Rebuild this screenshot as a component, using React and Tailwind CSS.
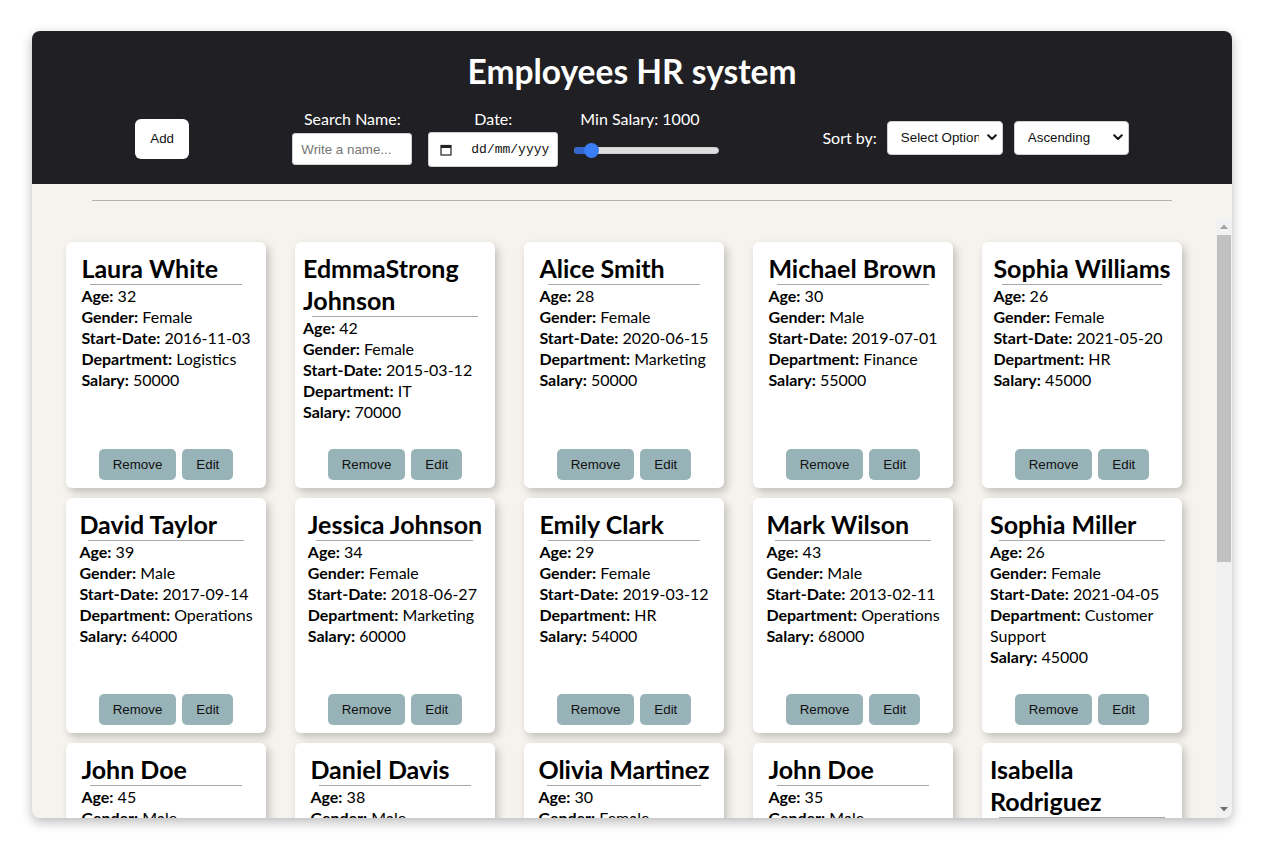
import React from "react";

const employees = [
  { name: "Laura White", age: 32, gender: "Female", start: "2016-11-03", dept: "Logistics", salary: 50000 },
  { name: "EdmmaStrong Johnson", age: 42, gender: "Female", start: "2015-03-12", dept: "IT", salary: 70000 },
  { name: "Alice Smith", age: 28, gender: "Female", start: "2020-06-15", dept: "Marketing", salary: 50000 },
  { name: "Michael Brown", age: 30, gender: "Male", start: "2019-07-01", dept: "Finance", salary: 55000 },
  { name: "Sophia Williams", age: 26, gender: "Female", start: "2021-05-20", dept: "HR", salary: 45000 },
  { name: "David Taylor", age: 39, gender: "Male", start: "2017-09-14", dept: "Operations", salary: 64000 },
  { name: "Jessica Johnson", age: 34, gender: "Female", start: "2018-06-27", dept: "Marketing", salary: 60000 },
  { name: "Emily Clark", age: 29, gender: "Female", start: "2019-03-12", dept: "HR", salary: 54000 },
  { name: "Mark Wilson", age: 43, gender: "Male", start: "2013-02-11", dept: "Operations", salary: 68000 },
  { name: "Sophia Miller", age: 26, gender: "Female", start: "2021-04-05", dept: "Customer Support", salary: 45000 },
  { name: "John Doe", age: 45, gender: "Male", start: "2012-05-10", dept: "Finance", salary: 72000 },
  { name: "Daniel Davis", age: 38, gender: "Male", start: "2016-08-22", dept: "IT", salary: 66000 },
  { name: "Olivia Martinez", age: 30, gender: "Female", start: "2019-10-01", dept: "Logistics", salary: 52000 },
  { name: "John Doe", age: 35, gender: "Male", start: "2018-01-15", dept: "Sales", salary: 58000 },
  { name: "Isabella Rodriguez", age: 27, gender: "Female", start: "2020-02-17", dept: "Marketing", salary: 48000 },
  { name: "James Anderson", age: 41, gender: "Male", start: "2014-04-09", dept: "Finance", salary: 69000 },
  { name: "Emma Thomas", age: 31, gender: "Female", start: "2019-11-25", dept: "HR", salary: 51000 },
  { name: "William Jackson", age: 36, gender: "Male", start: "2017-03-30", dept: "IT", salary: 63000 },
  { name: "Ava Harris", age: 24, gender: "Female", start: "2022-06-06", dept: "Sales", salary: 42000 },
  { name: "Noah Martin", age: 33, gender: "Male", start: "2018-12-03", dept: "Operations", salary: 57000 },
];

function Chevron() {
  return (
    <svg width="10" height="7" viewBox="0 0 10 7" className="shrink-0">
      <path d="M1.2 1.2 L5 5 L8.8 1.2" fill="none" stroke="#111" strokeWidth="2" strokeLinecap="round" strokeLinejoin="round" />
    </svg>
  );
}

function FakeSelect({ label, width }) {
  return (
    <div
      className={`flex items-center h-[34px] bg-white rounded-[4px] border border-[#cfcfcf] pl-[13px] pr-[5px] font-['Liberation_Sans',Arial,sans-serif] text-[13.33px] text-[#111] ${width}`}
    >
      <span className="w-[78px] overflow-hidden whitespace-nowrap">{label}</span>
      <span className="flex-1" />
      <Chevron />
    </div>
  );
}

function Card({ e }) {
  return (
    <div className="flex flex-col items-center bg-white rounded-md shadow-[3px_4px_8px_rgba(0,0,0,0.22)] pt-[10px] px-2 pb-2">
      <div className="max-w-full text-black">
        <h2 className="text-[25px] font-bold leading-[32px]">{e.name}</h2>
        <hr className="w-[90%] mx-auto border-0 border-t border-[#a9a9a9]" />
        <div className="text-[16px] leading-[21px]">
          <p><b>Age:</b> {e.age}</p>
          <p><b>Gender:</b> {e.gender}</p>
          <p><b>Start-Date:</b> {e.start}</p>
          <p><b>Department:</b> {e.dept}</p>
          <p><b>Salary:</b> {e.salary}</p>
        </div>
      </div>
      <div className="mt-auto pt-[27px] flex gap-[6px] font-['Liberation_Sans',Arial,sans-serif] text-[13.33px] text-[#111]">
        <button className="h-[31px] px-[14px] rounded-[5px] bg-[#97b3b8]">Remove</button>
        <button className="h-[31px] px-[14px] rounded-[5px] bg-[#97b3b8]">Edit</button>
      </div>
    </div>
  );
}

function Scrollbar() {
  return (
    <div className="w-[16px] shrink-0 bg-[#f1f1f1] flex flex-col">
      <div className="h-[17px] flex items-center justify-center">
        <svg width="8" height="5" viewBox="0 0 8 5">
          <path d="M0 5 L4 0.5 L8 5 Z" fill="#a3a3a3" />
        </svg>
      </div>
      <div className="flex-1 px-[1px]">
        <div className="h-[327px] bg-[#c1c1c1]" />
      </div>
      <div className="h-[17px] flex items-center justify-center">
        <svg width="8" height="5" viewBox="0 0 8 5">
          <path d="M0 0 L4 4.5 L8 0 Z" fill="#6e6e6e" />
        </svg>
      </div>
    </div>
  );
}

export default function App() {
  return (
    <div className="min-h-screen bg-white pt-[31px] pl-8 pb-[25px] font-['Lato','Noto_Sans',sans-serif]">
      <div className="w-[1200px] rounded-lg overflow-hidden bg-[#f6f3ee] shadow-[0_4px_12px_rgba(0,0,0,0.28)]">
        <header className="bg-[#202024] pt-[19px] pb-[17px]">
          <h1 className="text-center text-white text-[33.5px] font-bold leading-[42px]">Employees HR system</h1>
          <div className="flex justify-evenly items-center mt-[16px]">
            <button className="w-[54px] h-[40px] bg-white rounded-md font-['Liberation_Sans',Arial,sans-serif] text-[13.33px] text-[#111] mt-[3px]">
              Add
            </button>
            <div className="flex items-start gap-4 text-white text-[16px] leading-[21px]">
              <div className="flex flex-col items-center w-[120px]">
                <span>Search Name:</span>
                <div className="mt-[4px] w-[120px] h-[32px] bg-white rounded-[3px] border border-[#d0d0d0] flex items-center pl-[8px] font-['Liberation_Sans',Arial,sans-serif] text-[13.33px] text-[#757575]">
                  Write a name...
                </div>
              </div>
              <div className="flex flex-col items-center w-[130px]">
                <span>Date:</span>
                <div className="mt-[3px] w-[130px] h-[35px] bg-white rounded-[3px] border border-[#d0d0d0] flex items-center pl-[11px] text-[#111]">
                  <svg width="12" height="12" viewBox="0 0 12 12">
                    <rect x="1" y="1.5" width="10" height="9.5" fill="none" stroke="#222" strokeWidth="1.2" />
                    <rect x="1" y="1.5" width="10" height="2.5" fill="#222" />
                  </svg>
                  <span className="ml-[19px] font-['Liberation_Mono',monospace] text-[13px]">dd/mm/yyyy</span>
                </div>
              </div>
              <div className="flex flex-col items-start w-[145px]">
                <span className="ml-[6px]">Min Salary: 1000</span>
                <div className="relative mt-[11px] w-[145px] h-[20px] flex items-center">
                  <div className="w-full h-[7px] rounded-full bg-[#dedede] border border-[#cfcfcf]" />
                  <div className="absolute left-0 w-[18px] h-[7px] rounded-l-full bg-[#3366cc]" />
                  <div className="absolute left-[10px] w-[15px] h-[15px] rounded-full bg-[#3b7df5]" />
                </div>
              </div>
            </div>
            <div className="flex items-center text-white text-[16px]">
              <span className="mr-[10px]">Sort by:</span>
              <FakeSelect label="Select Option" width="w-[116px]" />
              <div className="w-[11px]" />
              <FakeSelect label="Ascending" width="w-[115px]" />
            </div>
          </div>
        </header>
        <div className="pt-4">
          <hr className="mx-[60px] border-0 border-t border-[#b3b3b3]" />
          <div className="mt-[17px] h-[600px] flex">
            <div className="flex-1 overflow-hidden">
              <div className="grid grid-cols-[repeat(5,200px)] justify-center gap-x-[29px] gap-y-[10px] pt-6 pb-6">
                {employees.map((e, i) => (
                  <Card key={i} e={e} />
                ))}
              </div>
            </div>
            <Scrollbar />
          </div>
        </div>
      </div>
    </div>
  );
}
